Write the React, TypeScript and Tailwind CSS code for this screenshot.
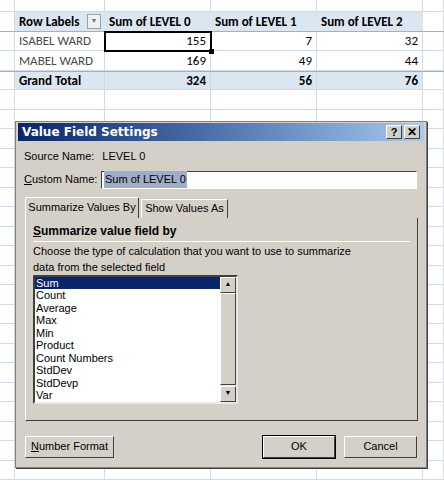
import React from 'react'

const cols = [15, 90, 106, 106, 106, 21]
const ui = { fontFamily: '"Liberation Sans", Arial, sans-serif' }

function Row({ h, cells, tint, bold, topLine }: { h: number; cells?: string[]; tint?: boolean; bold?: boolean; topLine?: boolean }) {
  return (
    <div className={`flex border-b border-[#d4dae4] ${topLine ? 'border-t border-t-[#95b3d7]' : ''}`} style={{ height: h }}>
      {cols.map((w, i) => (
        <div
          key={i}
          style={{ width: w }}
          className={`shrink-0 border-r border-[#d4dae4] flex items-center px-1 text-[13px] ${
            tint && i > 0 && i < 5 ? 'bg-[#dce6f1]' : ''
          } ${bold ? 'font-bold' : ''} ${i > 1 ? 'justify-end' : ''} ${i === 1 && !bold ? 'text-[#4a4a4a]' : 'text-black'}`}
        >
          {cells?.[i] ?? ''}
        </div>
      ))}
    </div>
  )
}

function Btn({ children, className = '', def }: { children: React.ReactNode; className?: string; def?: boolean }) {
  return (
    <div
      className={`h-[22px] flex items-center justify-center text-[11px] bg-[#d4d0c8] border border-t-white border-l-white border-r-[#404040] border-b-[#404040] ${
        def ? 'outline outline-1 outline-black' : ''
      } ${className}`}
    >
      {children}
    </div>
  )
}

export default function App() {
  const items = ['Sum', 'Count', 'Average', 'Max', 'Min', 'Product', 'Count Numbers', 'StdDev', 'StdDevp', 'Var']
  return (
    <div className="relative w-[444px] h-[483px] overflow-hidden bg-white" style={{ fontFamily: 'Carlito, "Open Sans", "Liberation Sans", sans-serif' }}>
      <Row h={12} />
      <div className="flex border-b border-[#95b3d7]" style={{ height: 20 }}>
        {cols.map((w, i) => (
          <div key={i} style={{ width: w }} className={`shrink-0 flex items-center px-1 text-[13px] font-bold ${i > 0 && i < 5 ? 'bg-[#dce6f1]' : 'border-r border-[#d4dae4]'}`}>
            {i === 1 && (
              <span className="flex items-center w-full justify-between">
                Row Labels
                <span className="w-[14px] h-[15px] border border-[#a0a0a0] bg-[#eef0f4] text-[7px] text-[#777] flex items-center justify-center">▼</span>
              </span>
            )}
            {i === 2 && 'Sum of LEVEL 0'}
            {i === 3 && 'Sum of LEVEL 1'}
            {i === 4 && 'Sum of LEVEL 2'}
          </div>
        ))}
      </div>
      <div className="relative">
        <Row h={19} cells={['', 'ISABEL WARD', '155', '7', '32']} />
        <div className="absolute left-[104px] top-[-1px] w-[108px] h-[21px] border-2 border-black" />
        <div className="absolute left-[209px] top-[17px] w-[5px] h-[5px] bg-black" />
      </div>
      <Row h={20} cells={['', 'MABEL WARD', '169', '49', '44']} />
      <Row h={19} cells={['', 'Grand Total', '324', '56', '76']} tint bold topLine />
      {Array.from({ length: 20 }).map((_, i) => (
        <Row key={i} h={19.5} />
      ))}

      <div className="absolute left-[15px] top-[121px] w-[412px] h-[347px] bg-[#d4d0c8] border border-[#808080] shadow-[1px_1px_0_#404040] text-black" style={ui}>
        <div className="h-[18px] mx-[2px] mt-[1px] flex items-center justify-between px-1 bg-gradient-to-r from-[#0a246a] to-[#a6caf0]">
          <span className="text-white text-[12px] font-bold" style={{ fontFamily: 'Verdana, "DejaVu Sans", sans-serif' }}>Value Field Settings</span>
          <div className="flex gap-[2px]">
            <div className="w-[16px] h-[14px] bg-[#d4d0c8] border border-t-white border-l-white border-r-[#404040] border-b-[#404040] text-[11px] font-bold flex items-center justify-center leading-none">?</div>
            <div className="w-[16px] h-[14px] bg-[#d4d0c8] border border-t-white border-l-white border-r-[#404040] border-b-[#404040] text-[12px] font-bold flex items-center justify-center leading-none">✕</div>
          </div>
        </div>
        <div className="text-[11px] mt-[7px] ml-[8px]">
          Source Name:<span className="ml-[8px]">LEVEL 0</span>
        </div>
        <div className="flex items-center mt-[6px] ml-[8px] text-[11px]">
          <span className="w-[77px]"><u>C</u>ustom Name:</span>
          <div className="w-[316px] h-[18px] bg-white border border-t-[#404040] border-l-[#404040] border-b-white border-r-white flex items-center px-[2px]">
            <span className="bg-[#a0acc8] px-[1px]">Sum of LEVEL 0</span>
          </div>
        </div>
        <div className="flex mt-[8px] ml-[9px] items-end">
          <div className="w-[114px] h-[21px] border border-b-0 border-t-white border-l-white border-r-[#404040] text-[11px] flex items-center justify-center rounded-t-[2px]">Summarize Values By</div>
          <div className="w-[87px] h-[19px] ml-[2px] border border-b-0 border-t-white border-l-white border-r-[#404040] text-[11px] flex items-center justify-center">Show Values As</div>
        </div>
        <div className="ml-[9px] w-[393px] h-[203px] border border-t-0 border-l-white border-r-[#404040] border-b-[#404040] px-[7px] pt-[4px]">
          <div className="text-[12px] font-bold"><u>S</u>ummarize value field by</div>
          <div className="h-px bg-[#808080] border-b border-white mt-[1px]" />
          <div className="text-[11px] leading-[16px] mt-[1px]">
            Choose the type of calculation that you want to use to summarize<br />data from the selected field
          </div>
          <div className="mt-0 w-[205px] h-[129px] bg-white border-2 border-t-[#404040] border-l-[#404040] border-b-[#e8e8e8] border-r-[#e8e8e8] flex">
            <div className="flex-1 text-[11px]">
              {items.map((t, i) => (
                <div key={t} className={`h-[12.5px] leading-[12.5px] px-[1px] ${i === 0 ? 'bg-[#0a246a] text-white' : ''}`}>{t}</div>
              ))}
            </div>
            <div className="w-[16px] flex flex-col bg-[#ece9e4]">
              <div className="h-[16px] bg-[#d4d0c8] border border-t-white border-l-white border-r-[#404040] border-b-[#404040] text-[7px] flex items-center justify-center">▲</div>
              <div className="h-[92px] bg-[#d4d0c8] border border-t-white border-l-white border-r-[#404040] border-b-[#404040]" />
              <div className="flex-1" />
              <div className="h-[16px] bg-[#d4d0c8] border border-t-white border-l-white border-r-[#404040] border-b-[#404040] text-[7px] flex items-center justify-center">▼</div>
            </div>
          </div>
        </div>
        <div className="flex mt-[15px] px-[9px]">
          <Btn className="w-[89px]"><u>N</u>umber Format</Btn>
          <div className="flex-1" />
          <Btn className="w-[72px]" def>OK</Btn>
          <Btn className="w-[73px] ml-[9px]">Cancel</Btn>
        </div>
      </div>
    </div>
  )
}
